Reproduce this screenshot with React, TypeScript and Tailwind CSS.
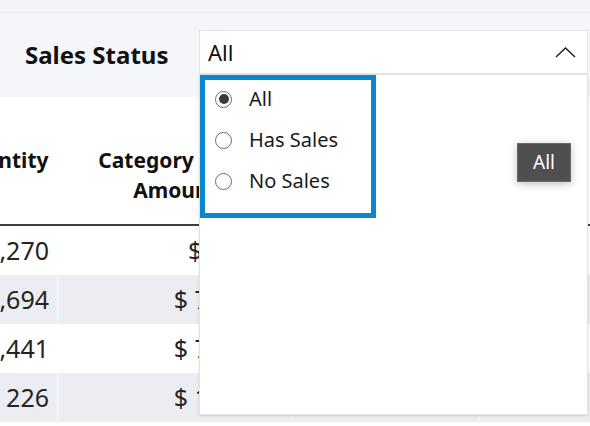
const rows = [
  { qty: '2,270', amount: '$ 92,345', share: '4.12%', trend: '▲' },
  { qty: '5,694', amount: '$ 712,345', share: '31.8%', trend: '▲' },
  { qty: '3,441', amount: '$ 723,918', share: '32.3%', trend: '▲' },
  { qty: '226', amount: '$ 118,402', share: '5.28%', trend: '▼' },
];

const options = ['All', 'Has Sales', 'No Sales'];

function Radio({ checked }: { checked: boolean }) {
  return (
    <span className="flex h-[17px] w-[17px] items-center justify-center rounded-full border border-[#6b6b6b] bg-white">
      {checked && <span className="h-[10px] w-[10px] rounded-full bg-[#3b3b3b]" />}
    </span>
  );
}

export default function App() {
  return (
    <div
      className="relative h-[426px] w-[590px] overflow-hidden bg-white text-[#252423]"
      style={{ fontFamily: '"Segoe UI", "Noto Sans", sans-serif' }}
    >
      {/* top strip */}
      <div className="h-[13px] border-b border-[#e6e7eb] bg-[#f3f4f8]" />

      {/* slicer header */}
      <div className="flex h-[84px] bg-[#f5f6fa]">
        <div className="w-[199px] pl-[25px] pt-[26px] text-[24px] font-bold leading-[32px] text-[#111]">
          Sales Status
        </div>
        <div className="mt-[17px] flex h-[44px] w-[389px] items-center justify-between border border-[#e4e4e6] bg-white pl-[8px] pr-[11px]">
          <span className="text-[22px] leading-none text-[#111]">All</span>
          <svg width="21" height="11" viewBox="0 0 21 11" fill="none">
            <path d="M1 10 L10.5 1 L20 10" stroke="#222" strokeWidth="1.5" />
          </svg>
        </div>
      </div>

      {/* table behind the dropdown */}
      <div className="-ml-[54px] flex w-[720px] flex-col">
        <div className="flex h-[129px] border-b-2 border-[#3f3f3f] text-[21px] font-bold leading-[30px] text-[#111]">
          <div className="w-[112px] pt-[48px] text-center">Quantity</div>
          <div className="w-[235px] px-[10px] pt-[48px] text-center">Category Sales Amount</div>
          <div className="w-[187px] px-[10px] pt-[48px] text-center">Share</div>
          <div className="w-[186px]" />
        </div>
        {rows.map((r, i) => (
          <div
            key={i}
            className={`flex h-[49px] items-center text-[25px] text-[#252423] ${i % 2 === 1 ? 'bg-[#ecedf2]' : 'bg-white'}`}
          >
            <div className="flex h-full w-[112px] items-center justify-end border-r border-white/70 pr-[8px]">{r.qty}</div>
            <div className="flex h-full w-[235px] items-center justify-end border-r border-white/70 pr-[5px]">{r.amount}</div>
            <div className="flex h-full w-[187px] items-center justify-end border-r border-white/70 pr-[10px]">{r.share}</div>
            <div className="flex h-full w-[186px] items-center pl-[40px] text-[14px] text-[#2ca02c]">{r.trend}</div>
          </div>
        ))}
      </div>

      {/* open dropdown list */}
      <div className="absolute left-[199px] top-[74px] h-[341px] w-[389px] border border-[#e3e3e3] bg-white shadow-sm">
        <div className="flex h-[143px] w-[176px] flex-col gap-[5px] border-[5px] border-[#0b86cf] pl-[10px] pt-[1px]">
          {options.map((o, i) => (
            <div key={o} className="flex h-[36px] items-center gap-[17px] text-[20px] text-[#1a1a1a]">
              <Radio checked={i === 0} />
              <span>{o}</span>
            </div>
          ))}
        </div>
      </div>

      {/* tooltip */}
      <div className="absolute left-[517px] top-[143px] flex h-[39px] w-[54px] items-center justify-center border border-[#6a6a6a] bg-[#4f4f4f] text-[19px] text-white shadow-[0_2px_8px_rgba(0,0,0,0.25)]">
        All
      </div>
    </div>
  );
}
